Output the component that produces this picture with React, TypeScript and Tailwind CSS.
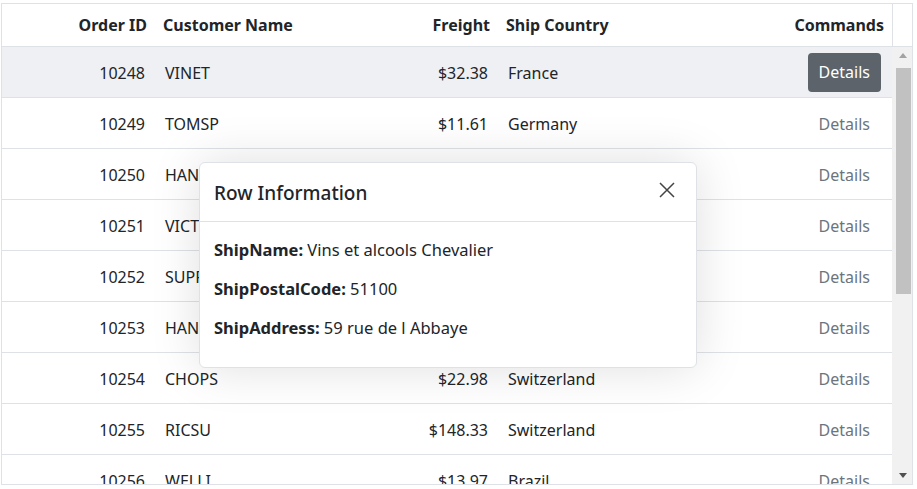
import React from 'react';

interface Order {
  id: number;
  customer: string;
  freight: string;
  country: string;
}

const orders: Order[] = [
  { id: 10248, customer: 'VINET', freight: '$32.38', country: 'France' },
  { id: 10249, customer: 'TOMSP', freight: '$11.61', country: 'Germany' },
  { id: 10250, customer: 'HANAR', freight: '$65.83', country: 'Brazil' },
  { id: 10251, customer: 'VICTE', freight: '$41.34', country: 'France' },
  { id: 10252, customer: 'SUPRD', freight: '$51.30', country: 'Belgium' },
  { id: 10253, customer: 'HANAR', freight: '$58.17', country: 'Brazil' },
  { id: 10254, customer: 'CHOPS', freight: '$22.98', country: 'Switzerland' },
  { id: 10255, customer: 'RICSU', freight: '$148.33', country: 'Switzerland' },
  { id: 10256, customer: 'WELLI', freight: '$13.97', country: 'Brazil' },
];

const font = { fontFamily: '"Noto Sans", "Open Sans", sans-serif' };

const App: React.FC = () => {
  return (
    <div className="w-[917px] h-[489px] bg-white pt-[3px] pl-[1px] text-[#212529] relative overflow-hidden" style={font}>
      <div className="w-[912px] h-[482px] border border-[#dee2e6] flex flex-col overflow-hidden">
        {/* header */}
        <div className="flex h-[43px] shrink-0 border-b border-[#dee2e6] font-bold text-[16px]">
          <div className="w-[153px] pr-[8px] flex items-center justify-end">Order ID</div>
          <div className="w-[221px] pl-[8px] flex items-center">Customer Name</div>
          <div className="w-[122px] pr-[8px] flex items-center justify-end">Freight</div>
          <div className="w-[197px] pl-[8px] flex items-center">Ship Country</div>
          <div className="w-[197px] pr-[8px] flex items-center justify-end">Commands</div>
          <div className="flex-1 border-l border-[#dee2e6]" />
        </div>
        {/* body */}
        <div className="flex flex-1 min-h-0">
          <div className="w-[890px] overflow-hidden">
            {orders.map((o, i) => (
              <div
                key={o.id}
                className={`flex h-[51px] shrink-0 border-b border-[#dee2e6] text-[16px] ${i === 0 ? 'bg-[#eef0f3]' : 'bg-white'}`}
              >
                <div className="w-[153px] pr-[10px] pt-[2px] flex items-center justify-end">{o.id}</div>
                <div className="w-[221px] pl-[10px] pt-[2px] flex items-center">{o.customer}</div>
                <div className="w-[122px] pr-[10px] pt-[2px] flex items-center justify-end">{o.freight}</div>
                <div className="w-[197px] pl-[10px] pt-[2px] flex items-center">{o.country}</div>
                <div className="w-[197px] pr-[11px] flex items-center justify-end">
                  {i === 0 ? (
                    <button className="h-[39px] px-[11px] rounded-[4px] bg-[#5c636a] text-white text-[16px]">Details</button>
                  ) : (
                    <span className="px-[11px] pt-[2px] text-[#6c757d]">Details</span>
                  )}
                </div>
              </div>
            ))}
          </div>
          {/* scrollbar */}
          <div className="w-[20px] bg-[#f1f1f1] flex flex-col items-center pl-[2px]">
            <div className="h-[17px] w-full flex items-center justify-center">
              <svg width="8" height="5" viewBox="0 0 8 5"><path d="M0 5 L4 0 L8 5 Z" fill="#a3a3a3" /></svg>
            </div>
            <div className="w-[15px] h-[226px] bg-[#c1c1c1] mt-[4px]" />
            <div className="flex-1" />
            <div className="h-[17px] w-full flex items-center justify-center">
              <svg width="8" height="5" viewBox="0 0 8 5"><path d="M0 0 L8 0 L4 5 Z" fill="#505050" /></svg>
            </div>
          </div>
        </div>
      </div>

      {/* dialog */}
      <div className="absolute left-[199px] top-[162px] w-[498px] h-[206px] bg-white border border-[#dee2e6] rounded-[6px] shadow-[0_0_50px_rgba(0,0,0,0.13)] flex flex-col">
        <div className="h-[59px] border-b border-[#dee2e6] flex items-center justify-between pl-[14px] pr-[20px]">
          <span className="text-[19px] font-medium pt-[3px]">Row Information</span>
          <svg width="18" height="18" viewBox="0 0 18 18" className="mb-[4px]">
            <path d="M2 2 L16 16 M16 2 L2 16" stroke="#444" strokeWidth="1.5" fill="none" />
          </svg>
        </div>
        <div className="px-[14px] pt-[16px] flex flex-col gap-[14px] text-[16.5px]">
          <div><span className="font-bold">ShipName:</span> Vins et alcools Chevalier</div>
          <div><span className="font-bold">ShipPostalCode:</span> 51100</div>
          <div><span className="font-bold">ShipAddress:</span> 59 rue de l Abbaye</div>
        </div>
      </div>
    </div>
  );
};

export default App;
